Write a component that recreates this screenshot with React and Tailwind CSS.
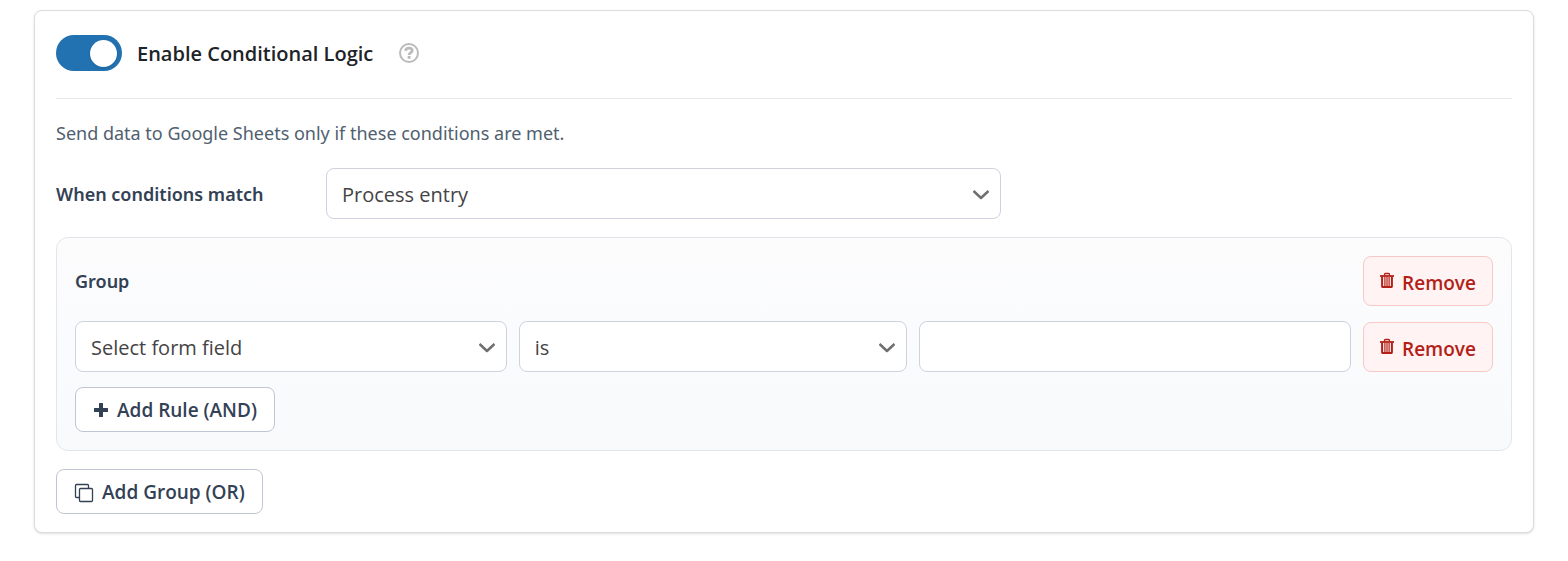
import { useState } from "react";

const HelpIcon = () => (
	<svg viewBox="0 0 20 20" className="size-5" fill="none" aria-hidden="true">
		<circle cx="10" cy="10" r="9" stroke="currentColor" strokeWidth="2" />
		<path
			d="M6.600 7.900C6.800 6 8.200 5.200 10 5.200c1.900 0 3.200 1 3.200 2.500 0 1.900-3.100 1.900-3.100 4.200"
			stroke="currentColor"
			strokeWidth="2.800"
		/>
		<rect x="8.600" y="13" width="3" height="2.800" rx="0.500" fill="currentColor" />
	</svg>
);

const TrashIcon = () => (
	<svg viewBox="0 0 14 16" className="w-3.5 h-4 mb-1.5" fill="none" stroke="currentColor" aria-hidden="true">
		<path d="M0 4h14" strokeWidth="1.800" />
		<path d="M4.500 3.500V2.400Q4.500 1.500 5.400 1.500h3.200q.9 0 .9.9V3.500" strokeWidth="1.300" />
		<path d="M2.100 4.500v9.700q0 .9.900.9h8q.9 0 .9-.9V4.500" strokeWidth="2" />
		<path d="M4.900 5v10M7 5v10M9.100 5v10" strokeWidth="1.200" />
	</svg>
);

const PlusIcon = () => (
	<svg viewBox="0 0 16 16" className="size-4 mb-0.5" fill="currentColor" aria-hidden="true">
		<path d="M6 1.500q0-.5.500-.5h3q.5 0 .5.500V6h4.500q.5 0 .5.500v3q0 .5-.5.500H10v4.500q0 .5-.5.500h-3q-.5 0-.5-.5V10H1.500q-.5 0-.5-.5v-3q0-.5.500-.5H6z" />
	</svg>
);

const CopyIcon = () => (
	<svg viewBox="0 0 20 20" className="size-5" fill="none" stroke="currentColor" strokeWidth="1.300" aria-hidden="true">
		<rect x="5.500" y="5.500" width="13" height="13" rx="1" />
		<path d="M5 14.500H2.500q-1 0-1-1v-11q0-1 1-1h11q1 0 1 1V5" />
	</svg>
);

const Select = ({ options, id, label }) => (
	<div className="grid items-center">
		<select
			id={id}
			aria-label={label}
			className="col-start-1 row-start-1 w-full min-w-0 h-[51px] appearance-none rounded-lg border border-[#cfd1de] bg-white pt-0.5 pl-[15px] pr-10 text-[20px] text-[#444]">
			{options.map((option) => (
				<option key={option}>{option}</option>
			))}
		</select>
		<svg
			viewBox="0 0 16 10"
			className="col-start-1 row-start-1 justify-self-end mr-3 mt-0.5 w-4 h-2.5 pointer-events-none"
			fill="none"
			stroke="#6f6f6f"
			strokeWidth="2.500"
			strokeLinejoin="round"
			aria-hidden="true">
			<path d="M0.500 1l7.500 7 7.500-7" />
		</svg>
	</div>
);

const RemoveButton = () => (
	<button
		type="button"
		className="flex h-[50px] w-[130px] items-center justify-center gap-2 rounded-lg border border-[#f8c9c7] bg-[#fff4f3] pt-1 text-[19px] font-semibold text-[#b32017]">
		<TrashIcon />
		Remove
	</button>
);

const AddButton = ({ icon, children }) => (
	<button
		type="button"
		className="flex h-[45px] items-center gap-2 rounded-lg border border-[#bfc5d3] bg-white px-[17px] pt-0.5 text-[19px] font-semibold text-[#334155]">
		{icon}
		{children}
	</button>
);

const App = () => {
	const [enabled, setEnabled] = useState(true);

	return (
		<main className="px-[34px] py-2.5 font-['Open_Sans','Noto_Sans',sans-serif]">
			<section className="rounded-lg border border-[#dcdcde] bg-white px-[21px] pt-6 pb-[18px] shadow-sm">
				<div className="flex items-center border-b border-[#e8e8ea] pb-[27px]">
					<label className="flex cursor-pointer items-center gap-[15px]">
						<input
							type="checkbox"
							checked={enabled}
							onChange={(e) => setEnabled(e.target.checked)}
							className="peer sr-only"
						/>
						<span className="flex h-9 w-[66px] items-center rounded-full bg-gray-300 px-[5px] peer-checked:justify-end peer-checked:bg-[#2271b1]">
							<span className="size-[27px] rounded-full bg-white shadow-sm" />
						</span>
						<span className="pt-0.5 text-[20px] font-semibold text-[#1d2327]">Enable Conditional Logic</span>
					</label>
					<button type="button" aria-label="Help" className="ml-[26px] text-[#bbb]">
						<HelpIcon />
					</button>
				</div>

				<p className="mt-5 font-['Noto_Sans',sans-serif] text-[18px] leading-7 text-[#50606f]">
					Send data to Google Sheets only if these conditions are met.
				</p>

				<div className="mt-[21px] grid grid-cols-[270px_minmax(0,675px)] items-center">
					<label
						htmlFor="match-action"
						className="pt-0.5 font-['Noto_Sans',sans-serif] text-[18px] font-semibold text-[#334155]">
						When conditions match
					</label>
					<Select id="match-action" options={["Process entry", "Do not process entry"]} />
				</div>

				{/* Condition group */}
				<div className="mt-[18px] rounded-xl border border-[#e2e5ec] bg-linear-to-b from-[#fcfcfd] to-[#f8fafc] px-[18px] py-[18px]">
					<div className="flex items-center justify-between">
						<h3 className="font-['Noto_Sans',sans-serif] text-[18px] font-semibold text-[#334155]">Group</h3>
						<RemoveButton />
					</div>
					<div className="mt-[15px] grid grid-cols-[1fr_0.9fr_1fr_auto] items-end gap-3">
						<Select label="Form field" options={["Select form field"]} />
						<Select label="Operator" options={["is", "is not"]} />
						<input
							type="text"
							aria-label="Value"
							className="h-[51px] w-full min-w-0 rounded-lg border border-[#cfd1de] bg-white px-[15px] text-[20px] text-[#444]"
						/>
						<RemoveButton />
					</div>
					<div className="mt-[15px] flex">
						<AddButton icon={<PlusIcon />}>Add Rule (AND)</AddButton>
					</div>
				</div>

				<div className="mt-[18px] flex">
					<AddButton icon={<CopyIcon />}>Add Group (OR)</AddButton>
				</div>
			</section>
		</main>
	);
};

export default App;
